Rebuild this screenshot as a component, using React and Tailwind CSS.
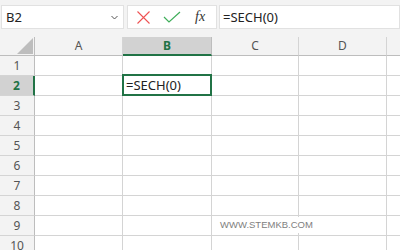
import React from "react";

const cols = [
  { l: "A", w: "w-[88px]" },
  { l: "B", w: "w-[89px]" },
  { l: "C", w: "w-[87px]" },
  { l: "D", w: "w-[88px]" },
  { l: "", w: "w-[20px]" },
];
const rows = [1, 2, 3, 4, 5, 6, 7, 8, 9, 10];

export default function App() {
  return (
    <div
      className="relative w-[400px] h-[250px] overflow-hidden bg-[#f3f3f3] text-[#444]"
      style={{ fontFamily: '"Noto Sans", "Open Sans", sans-serif' }}
    >
      {/* formula bar */}
      <div className="flex h-[37px] pt-[5px] pl-[1px]">
        <div className="flex shrink-0 items-center justify-between w-[123px] h-[24px] bg-white border border-[#e1e1e1] pl-[4px] pr-[4px]">
          <span className="text-[13px] text-[#222] leading-none">B2</span>
          <svg width="7" height="5" viewBox="0 0 7 5" className="mr-[1px]">
            <path d="M0.5 1 L3.5 4 L6.5 1" fill="none" stroke="#555" strokeWidth="1" />
          </svg>
        </div>
        <div className="flex shrink-0 items-center w-[90px] h-[24px] ml-[3px] bg-white border border-[#e1e1e1]">
          <svg width="13" height="13" viewBox="0 0 13 13" className="ml-[9px]">
            <path d="M0.5 0.5 L12.5 12.5 M12.5 0.5 L0.5 12.5" stroke="#ee5253" strokeWidth="1.1" />
          </svg>
          <svg width="18" height="12" viewBox="0 0 18 12" className="ml-[13px]">
            <path d="M1 6 L6 11 L17 1" fill="none" stroke="#3fae5a" strokeWidth="1.2" />
          </svg>
          <span
            className="ml-[14px] text-[14px] italic text-[#333] leading-none"
            style={{ fontFamily: '"Liberation Serif", serif' }}
          >
            fx
          </span>
        </div>
        <div className="flex items-center flex-1 h-[24px] ml-[2px] bg-white border border-[#e1e1e1] pl-[3px]">
          <span className="text-[13px] text-[#222] leading-none">=SECH(0)</span>
        </div>
      </div>

      {/* grid */}
      <div className="flex flex-col">
        {/* header row */}
        <div className="flex h-[19px]">
          <div className="relative shrink-0 w-[35px] h-full border-r border-b border-[#bdbdbd] bg-[#f3f3f3]">
            <svg width="16" height="16" viewBox="0 0 16 16" className="absolute left-[17px] top-[1px]">
              <path d="M16 0 L16 16 L0 16 Z" fill="#bdbdbd" />
            </svg>
          </div>
          {cols.map((c) =>
            c.l === "B" ? (
              <div
                key="B"
                className={`${c.w} shrink-0 h-full flex items-center justify-center bg-[#d2d2d2] border-r border-[#bdbdbd] border-b-2 border-b-[#217346] text-[12px] font-bold text-[#217346]`}
              >
                B
              </div>
            ) : (
              <div
                key={c.l || "E"}
                className={`${c.w} shrink-0 h-full flex items-center justify-center border-r border-b border-[#d4d4d4] border-b-[#bdbdbd] text-[12px] text-[#555]`}
              >
                {c.l}
              </div>
            )
          )}
        </div>
        {rows.map((r) => (
          <div key={r} className="flex h-[20px]">
            {r === 2 ? (
              <div className="shrink-0 w-[35px] h-full flex items-center justify-center bg-[#d2d2d2] border-r-2 border-r-[#217346] border-b border-b-[#d4d4d4] text-[12px] font-bold text-[#217346]">
                2
              </div>
            ) : (
              <div className="shrink-0 w-[35px] h-full flex items-center justify-center bg-[#f3f3f3] border-r border-r-[#bdbdbd] border-b border-b-[#d4d4d4] text-[12px] text-[#555]">
                {r}
              </div>
            )}
            {cols.map((c) => (
              <div
                key={c.l || "E"}
                className={`relative ${c.w} shrink-0 h-full bg-white border-r border-b border-[#d4d4d4]`}
              >
                {r === 2 && c.l === "B" && (
                  <div className="absolute -top-[2px] -left-[1px] -right-[1px] -bottom-[1px] border-2 border-[#217346] flex items-center pl-[2px] z-10">
                    <span className="text-[13px] text-[#222] leading-none">=SECH(0)</span>
                  </div>
                )}
              </div>
            ))}
          </div>
        ))}
      </div>

      {/* watermark */}
      <div
        className="absolute left-[212px] top-[217px] w-[110px] h-[16px] bg-white flex items-center pl-[8px] text-[9.5px] text-[#808080]"
        style={{ fontFamily: '"Liberation Sans", sans-serif' }}
      >
        WWW.STEMKB.COM
      </div>
    </div>
  );
}
